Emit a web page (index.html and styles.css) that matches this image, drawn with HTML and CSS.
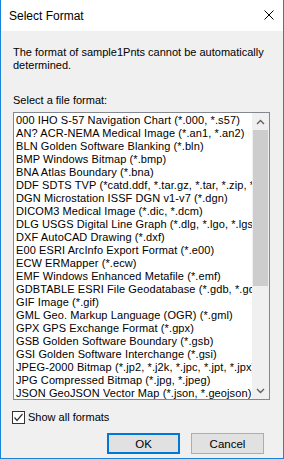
FILE: index.html
```html
<!DOCTYPE html>
<html>
<head>
<meta charset="utf-8">
<link rel="stylesheet" href="styles.css">
</head>
<body>
<div class="window">
  <div class="titlebar">
    <span class="title">Select Format</span>
    <svg class="close" width="10" height="10" viewBox="0 0 10 10"><path d="M0.5 0.5 L9.5 9.5 M9.5 0.5 L0.5 9.5" stroke="#000" stroke-width="1" fill="none"/></svg>
  </div>
  <div class="body">
    <p class="msg">The format of sample1Pnts cannot be automatically determined.</p>
    <p class="label">Select a file format:</p>
    <div class="listbox">
      <ul class="items">
        <li>000 IHO S-57 Navigation Chart (*.000, *.s57)</li>
        <li>AN? ACR-NEMA Medical Image (*.an1, *.an2)</li>
        <li>BLN Golden Software Blanking (*.bln)</li>
        <li>BMP Windows Bitmap (*.bmp)</li>
        <li>BNA Atlas Boundary (*.bna)</li>
        <li>DDF SDTS TVP (*catd.ddf, *.tar.gz, *.tar, *.zip, *.gz)</li>
        <li>DGN Microstation ISSF DGN v1-v7 (*.dgn)</li>
        <li>DICOM3 Medical Image (*.dic, *.dcm)</li>
        <li>DLG USGS Digital Line Graph (*.dlg, *.lgo, *.lgs)</li>
        <li>DXF AutoCAD Drawing (*.dxf)</li>
        <li>E00 ESRI ArcInfo Export Format (*.e00)</li>
        <li>ECW ERMapper (*.ecw)</li>
        <li>EMF Windows Enhanced Metafile (*.emf)</li>
        <li>GDBTABLE ESRI File Geodatabase (*.gdb, *.gdbtable)</li>
        <li>GIF Image (*.gif)</li>
        <li>GML Geo. Markup Language (OGR) (*.gml)</li>
        <li>GPX GPS Exchange Format (*.gpx)</li>
        <li>GSB Golden Software Boundary (*.gsb)</li>
        <li>GSI Golden Software Interchange (*.gsi)</li>
        <li>JPEG-2000 Bitmap (*.jp2, *.j2k, *.jpc, *.jpt, *.jpx)</li>
        <li>JPG Compressed Bitmap (*.jpg, *.jpeg)</li>
        <li>JSON GeoJSON Vector Map (*.json, *.geojson)</li>
      </ul>
      <div class="scrollbar">
        <div class="arrow">
          <svg width="9" height="6" viewBox="0 0 9 6"><path d="M1 5 L4.5 1.5 L8 5" stroke="#606060" stroke-width="1.4" fill="none"/></svg>
        </div>
        <div class="track"><div class="thumb"></div></div>
        <div class="arrow">
          <svg width="9" height="6" viewBox="0 0 9 6"><path d="M1 1 L4.5 4.5 L8 1" stroke="#606060" stroke-width="1.4" fill="none"/></svg>
        </div>
      </div>
    </div>
    <label class="check">
      <span class="box"><svg width="11" height="11" viewBox="0 0 11 11"><path d="M1.5 5.5 L4 8.5 L9.5 2" stroke="#333" stroke-width="1.2" fill="none"/></svg></span>
      <span class="check-text">Show all formats</span>
    </label>
    <div class="buttons">
      <button class="btn btn-default">OK</button>
      <button class="btn">Cancel</button>
    </div>
  </div>
</div>
</body>
</html>
```

FILE: styles.css
```css
* { box-sizing: border-box; }
html, body { margin: 0; padding: 0; }
body {
  font-family: "Liberation Sans", Arial, sans-serif;
  font-size: 11px;
  color: #000;
  background: #fff;
}
.window {
  width: 284px;
  height: 459px;
  background: #f0f0f0;
  border: 1px solid #1883d7;
  border-top: none;
  display: flex;
  flex-direction: column;
}
.titlebar {
  height: 31px;
  background: #fff;
  display: flex;
  align-items: flex-start;
  padding: 10px 9px 0 8px;
}
.title {
  font-size: 12px;
  line-height: 13px;
}
.close {
  display: block;
  margin-left: auto;
}
.body {
  padding: 0 13px 0 12px;
  display: flex;
  flex-direction: column;
}
.msg {
  margin: 15px 0 0 0;
  line-height: 13px;
}
.label {
  margin: 22px 0 0 0;
  line-height: 13px;
}
.listbox {
  margin-top: 5px;
  height: 288px;
  width: 257px;
  border: 1px solid #828790;
  background: #fff;
  display: flex;
  overflow: hidden;
}
.items {
  list-style: none;
  margin: 0;
  padding: 1px 0 0 2px;
  flex: 1;
  min-width: 0;
  overflow: hidden;
  letter-spacing: 0.1px;
}
.items li {
  height: 13px;
  line-height: 13px;
  white-space: nowrap;
}
.scrollbar {
  width: 17px;
  flex: none;
  background: #f0f0f0;
  display: flex;
  flex-direction: column;
}
.arrow {
  height: 17px;
  display: flex;
  align-items: center;
  justify-content: center;
  flex: none;
}
.arrow svg { display: block; }
.track {
  flex: 1;
  padding: 0 1px;
}
.thumb {
  height: 156px;
  background: #cdcdcd;
}
.check {
  margin: 11px 0 0 -1px;
  display: flex;
  align-items: center;
  line-height: 13px;
}
.box {
  width: 13px;
  height: 13px;
  border: 1px solid #333;
  background: #fff;
  display: flex;
  align-items: center;
  justify-content: center;
}
.box svg { display: block; }
.check-text { margin-left: 3px; }
.buttons {
  margin: 9px 6px 0 0;
  display: flex;
  justify-content: flex-end;
  gap: 11px;
}
.btn {
  width: 73px;
  height: 21px;
  padding: 0;
  margin: 0;
  font-family: "Liberation Sans", Arial, sans-serif;
  font-size: 11.5px;
  color: #000;
  background: #e1e1e1;
  border: 1px solid #adadad;
}
.btn-default {
  border: 2px solid #0078d7;
}
```
